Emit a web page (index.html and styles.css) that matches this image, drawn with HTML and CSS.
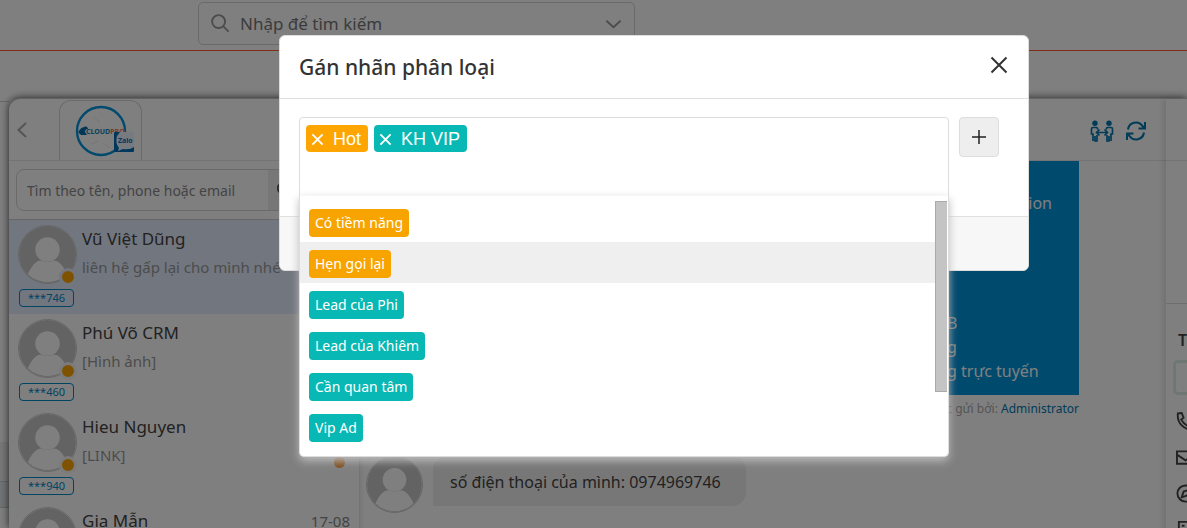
FILE: index.html
```html
<!DOCTYPE html>
<html lang="vi">
<head>
<meta charset="utf-8">
<title>Gán nhãn phân loại</title>
<link rel="stylesheet" href="styles.css">
</head>
<body>
<svg class="defs" width="0" height="0" aria-hidden="true">
  <symbol id="person" viewBox="0 0 58 58">
    <circle cx="29" cy="29" r="29" fill="#c6c6c6"/>
    <circle cx="29" cy="24" r="12.500" fill="#fff"/>
    <path d="M9 49C12 42 16 36 22 35Q29 38 36 35C42 36 46 42 49 49A28.500 28.500 0 0 1 9 49Z" fill="#fff"/>
  </symbol>
</svg>
<div class="app">
  <header class="topbar">
    <form class="search">
      <svg class="search-icon" viewBox="0 0 20 20"><circle cx="8" cy="8" r="6.800"/><path d="M13 13L18.500 18.500"/></svg>
      <input type="text" aria-label="Tìm kiếm" placeholder="Nhập để tìm kiếm">
      <svg class="chevron" viewBox="0 0 18 10"><path d="M1.500 1.500L9 8.500L16.500 1.500"/></svg>
    </form>
  </header>
  <div class="toolbar"></div>
  <main class="workspace">
    <div class="gutter"><span class="g1"></span><span class="g2"></span><span class="g3"></span></div>
    <div class="panel">
      <section class="inbox">
        <nav class="tabs">
          <button class="back" aria-label="Quay lại"><svg viewBox="0 0 10 18"><path d="M9 2L1.500 9L9 16"/></svg></button>
          <button class="tab" aria-label="CloudPro Zalo">
            <svg class="logo" viewBox="0 0 60 52">
              <circle cx="26" cy="26" r="24" fill="none" stroke="#0095dc" stroke-width="2.400"/>
              <path d="M18 12L25 17M28 38L35 43M16 39L24 36" stroke="#eee" fill="none"/>
              <path d="M5 29C3 28 3 25 5 25C6 22 8 23 9 22C11 21 13 22 13 24Q10 24 10 27L12 30H6Z" fill="#006fae"/>
              <text x="11" y="29" class="brand">CLOUD<tspan class="brand-pro">PRO</tspan></text>
              <rect x="39" y="27" width="20" height="20" rx="1" fill="#006fb8"/>
              <path d="M45 27H59V42Q55 45 48 44L43 46L44 43Q40 38 42 31Z" fill="#eef6ff"/>
              <text x="43" y="38" class="zalo">Zalo</text>
            </svg>
          </button>
        </nav>
        <form class="filter">
          <input type="text" aria-label="Tìm khách hàng" placeholder="Tìm theo tên, phone hoặc email">
          <button type="button" aria-label="Tìm"><svg viewBox="0 0 20 20"><circle cx="8" cy="8" r="6"/><path d="M13 13L18 18"/></svg></button>
        </form>
        <ul class="contacts">
          <li class="contact selected">
            <div class="who"><svg class="avatar"><use href="#person"/></svg><i class="status"></i><span class="phone">***746</span></div>
            <div class="info"><h3>Vũ Việt Dũng</h3><p>liên hệ gấp lại cho mình nhé</p></div>
          </li>
          <li class="contact">
            <div class="who"><svg class="avatar"><use href="#person"/></svg><i class="status"></i><span class="phone">***460</span></div>
            <div class="info"><h3>Phú Võ CRM</h3><p>[Hình ảnh]</p></div>
          </li>
          <li class="contact">
            <div class="who"><svg class="avatar"><use href="#person"/></svg><i class="status"></i><span class="phone">***940</span></div>
            <div class="info"><h3>Hieu Nguyen</h3><p>[LINK]</p></div>
            <i class="unread"></i>
          </li>
          <li class="contact">
            <div class="who"><svg class="avatar"><use href="#person"/></svg><i class="status"></i></div>
            <div class="info"><h3>Gia Mẫn</h3></div>
            <time>17-08</time>
          </li>
        </ul>
      </section>
      <section class="chat">
        <div class="chat-head">
          <button aria-label="Chuyển"><svg class="transfer" viewBox="0 0 24 22">
            <g fill="#0078b0"><circle cx="5" cy="3.200" r="2.700"/><circle cx="19" cy="3.200" r="2.700"/></g>
            <g fill="none" stroke="#0078b0" stroke-width="1.700"><path d="M7.500 9.500V8.500Q7.500 7.500 6.500 7.500H3Q1.500 7.500 1.500 9V14H3V21M7 15V21H5V16M16.500 9.500V8.500Q16.500 7.500 17.500 7.500H21Q22.500 7.500 22.500 9V14H21V21M17 15V21H19V16M7 12.500H17M9.500 9.500L6.500 12.500L9.500 15.500M14.500 9.500L17.500 12.500L14.500 15.500"/></g></svg></button>
          <button aria-label="Tải lại"><svg class="reload" viewBox="0 0 20 20"><path d="M2 8.500A8 8 0 0 1 16.500 5L18.500 7M19 1V7.500H12.500M18 11.500A8 8 0 0 1 3.500 15L1.500 13M1 19V12.500H7.500"/></svg></button>
        </div>
        <div class="thread">
          <div class="sent">
            <p class="sent-first">ion</p>
            <p>B</p>
            <p>g</p>
            <p>g trực tuyến</p>
          </div>
          <p class="meta">c gửi bởi: <a href="#">Administrator</a></p>
          <div class="received"><svg class="avatar"><use href="#person"/></svg><p>số điện thoại của mình: 0974969746</p></div>
        </div>
      </section>
      <aside class="details">
        <div class="details-head"></div>
        <div class="details-card"></div>
        <div class="details-body">
          <h2>T</h2>
          <div class="chip"></div>
          <svg viewBox="0 0 20 20"><path d="M2 1.500L6 1L8 6L5.500 8Q8 12.500 12 14.500L14 12L19 14L18 18.500Q11 19 6 14T2 1.500Z"/></svg>
          <svg viewBox="0 0 20 20"><path d="M1 3.500H19V16.500H1ZM1 7L10 13L19 7"/></svg>
          <svg viewBox="0 0 20 20"><circle cx="10" cy="10" r="8.500"/><path d="M6 14L8 8L14 6L12 12Z"/></svg>
          <svg viewBox="0 0 20 20"><path d="M3 19V2H17V19M6 6H9M6 10H9M12 6H14M12 10H14"/></svg>
        </div>
      </aside>
    </div>
  </main>
</div>
<div class="backdrop">
  <div class="modal" role="dialog" aria-labelledby="title">
    <div class="modal-head">
      <h1 id="title">Gán nhãn phân loại</h1>
      <button class="close" aria-label="Đóng"><svg viewBox="0 0 18 18"><path d="M1.500 1.500L16.500 16.500M16.500 1.500L1.500 16.500"/></svg></button>
    </div>
    <div class="modal-body">
      <div class="picker">
        <div class="selected-tags">
          <span class="tag orange"><button aria-label="Bỏ Hot"><svg viewBox="0 0 14 14"><path d="M1.500 1.500L12.500 12.500M12.500 1.500L1.500 12.500"/></svg></button>Hot</span>
          <span class="tag teal"><button aria-label="Bỏ KH VIP"><svg viewBox="0 0 14 14"><path d="M1.500 1.500L12.500 12.500M12.500 1.500L1.500 12.500"/></svg></button>KH VIP</span>
        </div>
        <div class="dropdown">
          <ul class="options" role="listbox">
            <li role="option"><span class="label orange">Có tiềm năng</span></li>
            <li role="option" class="active"><span class="label orange">Hẹn gọi lại</span></li>
            <li role="option"><span class="label teal">Lead của Phi</span></li>
            <li role="option"><span class="label teal">Lead của Khiêm</span></li>
            <li role="option"><span class="label teal">Cần quan tâm</span></li>
            <li role="option"><span class="label teal">Vip Ad</span></li>
          </ul>
          <div class="scroll"><span></span></div>
        </div>
      </div>
      <button class="add" aria-label="Thêm nhãn"><svg viewBox="0 0 16 16"><path d="M8 1V15M1 8H15"/></svg></button>
    </div>
    <div class="modal-foot"></div>
  </div>
</div>
</body>
</html>
```
FILE: styles.css
```css
* { box-sizing: border-box; }
body { margin: 0; height: 100vh; overflow: hidden; background: #fff; font-family: "Noto Sans", "Open Sans", sans-serif; color: #555; }
h1, h2, h3, p, ul { margin: 0; padding: 0; font-weight: 400; list-style: none; }
button { border: 0; padding: 0; background: none; font: inherit; color: inherit; display: flex; align-items: center; justify-content: center; }
input { border: 0; outline: 0; background: none; font: inherit; min-width: 0; padding: 0; }
svg { display: block; fill: none; }
.defs { position: absolute; }

.app { height: 100vh; display: flex; flex-direction: column; overflow: hidden; }
.topbar { height: 51px; flex: none; border-bottom: 1px solid #ff5a2d; padding: 2px 0 0 198px; }
.search { width: 437px; height: 43px; border: 1px solid #d4d4d4; border-radius: 5px; display: flex; align-items: center; gap: 10px; padding: 0 12px; }
.search input { flex: 1; font-size: 17px; }
.search input::placeholder { color: #777; opacity: 1; }
.search-icon { width: 19px; height: 19px; stroke: #999; stroke-width: 2; }
.chevron { width: 17px; height: 10px; stroke: #999; stroke-width: 2; }
.toolbar { height: 47px; flex: none; }

.workspace { flex: 1; min-height: 0; display: flex; }
.gutter { width: 9px; flex: none; border-top: 1px solid #d0d0d0; margin-top: 3px; background: #fff; display: flex; flex-direction: column; }
.g1 { height: 380px; border-bottom: 1px solid #ccc; background: linear-gradient(#fff 340px, #f0f0f0 340px); }
.g2 { height: 26px; background: #e3e8ec; border-bottom: 1px solid #ccc; }
.panel { flex: 1; min-width: 0; display: grid; grid-template-columns: 351px 1fr 21px; background: #fff; border-top: 1px solid #ccc; border-top-left-radius: 12px; box-shadow: 0 0 9px rgba(0, 0, 0, .7); }

.inbox { min-width: 0; border-right: 1px solid #e6e6e6; box-shadow: 1px 0 5px rgba(0, 0, 0, .1); }
.tabs { height: 62px; display: flex; border-bottom: 1px solid #e8e8e8; padding-top: 1px; }
.back { width: 50px; padding-right: 24px; }
.back svg { width: 10px; height: 18px; stroke: #aaa; stroke-width: 2; }
.tab { width: 83px; border: 1px solid #d4d4d4; border-bottom: 0; border-radius: 12px 12px 0 0; }
.logo { width: 60px; height: 52px; margin-left: 8px; }
.brand { font: 700 7px "Noto Sans", sans-serif; fill: #1685b8; }
.brand-pro { fill: #f07a3c; }
.zalo { font: 700 7px "Noto Sans", sans-serif; fill: #0075c0; }
.filter { height: 42px; margin: 8px 7px; border: 1px solid #d4d4d4; border-radius: 8px; display: flex; overflow: hidden; }
.filter input { flex: 1; padding-left: 10px; font-size: 14px; }
.filter input::placeholder { color: #888; opacity: 1; }
.filter button { width: 83px; background: #eee; padding-right: 50px; }
.filter button svg { width: 18px; stroke: #555; stroke-width: 2; }

.contact { height: 94px; display: flex; gap: 5px; padding: 5px 9px; }
.contact.selected { height: 95px; background: #e4edff; border-top: 1px solid #ccc; }
.who { position: relative; width: 59px; flex: none; }
.avatar { width: 59px; height: 59px; flex: none; border: 1px solid #ccc; border-radius: 50%; }
.status { position: absolute; left: 41px; top: 43px; width: 18px; height: 18px; border-radius: 50%; background: #ffa500; border: 3px solid #f6f6f6; }
.selected .status { border-color: #e4edff; }
.phone { display: block; width: 55px; height: 18px; margin: 5px 0 0 1px; border: 1px solid #0088c8; border-radius: 4px; text-align: center; font-size: 11px; line-height: 16px; color: #0088c8; }
.info { flex: 1; min-width: 0; white-space: nowrap; }
.info h3 { font-size: 17px; line-height: 28px; color: #444; }
.info p { font-size: 15px; line-height: 28px; color: #999; }
time { font-size: 15px; line-height: 28px; color: #888; }
.unread { width: 11px; height: 11px; border-radius: 50%; background: #ffa040; margin: 44px 5px 0 0; }

.chat { min-width: 0; }
.chat-head { height: 62px; border-bottom: 1px solid #e8e8e8; display: flex; justify-content: flex-end; gap: 12px; padding: 2px 20px 0 0; }
.transfer { width: 24px; height: 22px; }
.reload { width: 20px; height: 20px; stroke: #0078b0; stroke-width: 2; }
.thread { padding: 0 87px 0 6px; }
.sent { width: 180px; height: 234px; margin-left: auto; background: #0095dc; color: #fff; font-size: 16px; line-height: 24px; padding: 30px 27px 0 48px; white-space: nowrap; }
.sent-first { text-align: right; margin-bottom: 96px; }
.meta { font-size: 12px; line-height: 28px; text-align: right; color: #aaa; }
.meta a { color: #0078b0; text-decoration: none; }
.received { display: flex; gap: 10px; margin-top: 33px; }
.received p { height: 50px; line-height: 52px; padding: 0 25px 0 17px; background: #eee; color: #444; border-radius: 14px 14px 14px 0; font-size: 16px; white-space: nowrap; }
.received .avatar { width: 57px; height: 57px; }

.details { overflow: hidden; box-shadow: -3px 0 6px rgba(0, 0, 0, .12); }
.details-head { height: 62px; border-bottom: 1px solid #e8e8e8; }
.details-card { height: 143px; border-bottom: 1px solid #ddd; }
.details-body { width: 200px; padding: 24px 7px; display: flex; flex-direction: column; }
.details-body h2 { font-size: 16px; font-weight: 600; line-height: 24px; padding-left: 5px; color: #444; }
.chip { height: 35px; margin: 8px 0 17px; border: 3px solid #dfeee6; border-radius: 5px; }
.details-body svg { width: 19px; height: 19px; margin: 0 0 17px 3px; stroke: #444; stroke-width: 2; }

.backdrop { position: absolute; inset: 0; background: rgba(0, 0, 0, .5); padding: 35px 158px 0 279px; }
.modal { background: #fff; border: 1px solid #ddd; border-radius: 6px; }
.modal-head { height: 63px; display: flex; justify-content: space-between; align-items: center; padding: 0 20px 0 19px; border-bottom: 1px solid #e0e0e0; }
.modal-head h1 { font-size: 21px; font-weight: 500; line-height: 30px; color: #333; }
.close svg { width: 18px; height: 18px; stroke: #333; stroke-width: 2; margin-bottom: 5px; }
.modal-body { display: flex; align-items: flex-start; gap: 10px; padding: 18px 29px 0 19px; }
.picker { position: relative; flex: 1; height: 99px; border: 1px solid #ddd; border-radius: 4px; }
.selected-tags { display: flex; gap: 6px; padding: 7px 6px; }
.tag { display: flex; align-items: center; gap: 9px; height: 27px; padding: 1px 7px 0 5px; border-radius: 4px; color: #fff; font: 18px "Liberation Sans", Arial, sans-serif; }
.tag svg { width: 13px; height: 13px; stroke: #fff; stroke-width: 2; }
.orange { background: #ffa500; }
.teal { background: #08b8b4; }
.add { width: 40px; height: 40px; border: 1px solid #ddd; border-radius: 4px; background: #eee; }
.add svg { width: 16px; height: 16px; stroke: #222; stroke-width: 1.500; }
.modal-foot { height: 54px; background: #f7f7f7; border-top: 1px solid #e0e0e0; border-radius: 0 0 6px 6px; }

.dropdown { position: absolute; top: 77px; left: -1px; right: -1px; display: flex; background: #fff; border: 1px solid #ddd; border-top-color: #f7f7f7; border-radius: 0 0 5px 5px; padding: 5px 0 9px; box-shadow: 0 4px 8px #bbb; }
.options { flex: 1; }
.options li { height: 41px; display: flex; align-items: center; padding: 3px 9px 0; }
.options .active { background: #efefef; }
.label { height: 28px; line-height: 27px; padding: 0 6px; border-radius: 4px; color: #fff; font-size: 14px; }
.label.orange { background: #f7a400; }
.scroll { width: 13px; padding-right: 1px; }
.scroll span { display: block; height: 191px; background: #c4c4c4; border: 1px solid #aaa; border-right: 0; }
```
